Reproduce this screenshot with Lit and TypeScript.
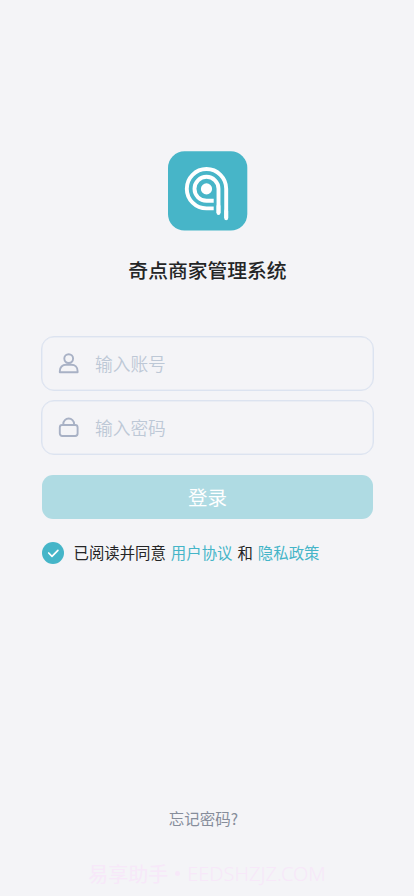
import { LitElement, html, css } from "lit";
import { customElement } from "lit/decorators.js";

@customElement("app-root")
export class AppRoot extends LitElement {
  static styles = css`
    :host {
      display: flex;
      flex-direction: column;
      box-sizing: border-box;
      width: 100%;
      height: 896px;
      padding: 151px 41px 0;
      overflow: hidden;
      background: #f4f4f7;
      color: #242526;
      font-family: "Noto Sans CJK SC", sans-serif;
    }
    svg { display: block; flex: none; }
    .logo { align-self: center; width: 80px; height: 80px; margin-left: 1px; }
    .title {
      margin: 24px 0 0 1px;
      text-align: center;
      font-size: 19.8px;
      line-height: 30px;
      font-weight: 500;
      white-space: nowrap;
    }
    .form { display: flex; flex-direction: column; gap: 9px; margin-top: 51px; width: 333px; }
    .field {
      display: flex;
      align-items: center;
      box-sizing: border-box;
      height: 55px;
      padding-left: 16px;
      gap: 15px;
      border: 1px solid #dce3f0;
      box-shadow: inset 0 0 0 0.5px #dfe6f2;
      border-radius: 13px;
    }
    .field input {
      flex: 1;
      min-width: 0;
      height: 30px;
      padding: 0;
      margin: 0 0 2px;
      border: 0;
      outline: 0;
      background: none;
      font: 350 17.7px/30px "Noto Sans CJK SC", sans-serif;
      color: #242526;
    }
    .field input::placeholder { color: #bdc8d6; opacity: 1; }
    .login {
      width: 331px;
      height: 44px;
      margin: 20.4px 0 0 1px;
      padding: 0;
      border: 0;
      border-radius: 11px;
      background: #afdbe3;
      color: #fff;
      font: 400 19.5px/44px "Noto Sans CJK SC", sans-serif;
    }
    .agree {
      display: flex;
      align-items: center;
      margin: 22.2px 0 0 1px;
      height: 22px;
      font-size: 15.4px;
      line-height: 22px;
      white-space: nowrap;
    }
    .agree span { margin: 0 0 2px 9.5px; }
    .agree .link, .agree .and { margin-left: 5px; }
    .link { color: #45b5c8; }
    .forgot {
      margin: 242.4px 0 0;
      padding-right: 7px;
      text-align: center;
      font-size: 15.5px;
      line-height: 24px;
      color: #868d9b;
    }
    .mark {
      display: flex;
      justify-content: center;
      align-items: center;
      gap: 7px;
      margin: 29px -41px 0;
      font-size: 20px;
      line-height: 30px;
      color: #f7e8f9;
      white-space: nowrap;
    }
    .dot { width: 5px; height: 5px; border-radius: 50%; background: #f7e8f9; }
    .latin { font-family: "Noto Sans", sans-serif; font-size: 20px; font-weight: 300; }
  `;

  render() {
    return html`
      <svg class="logo" viewBox="0 0 80 80" fill="none" stroke="#fff" stroke-width="3.9">
        <rect x="0" y="0.3" width="79.3" height="79.3" rx="16.5" fill="#47b5c8" stroke="none" />
        <circle cx="38.5" cy="37.9" r="5.6" fill="#fff" stroke="none" />
        <path d="M45.7 57.4H38.5A19.7 19.7 0 1 1 58.2 37.7V67" />
        <path d="M45.7 49.8H38.5A12 12 0 1 1 50.5 37.8V62" />
        <path stroke-linecap="round" d="M58.2 60V67.3M50.5 55V62" />
      </svg>
      <h1 class="title">奇点商家管理系统</h1>
      <div class="form">
        <label class="field">
          <svg width="22" height="22" viewBox="0 0 22 22" fill="none" stroke="#a8b1c5" stroke-width="1.9" stroke-linejoin="round">
            <circle cx="10.7" cy="5.6" r="4.4" />
            <path d="M1.8 19.2V18.2C1.8 14.3 4.4 11.8 8 11.8H13.4C17 11.8 19.6 14.3 19.6 18.2V19.2Z" />
          </svg>
          <input placeholder="输入账号" />
        </label>
        <label class="field">
          <svg width="22" height="22" viewBox="0 0 22 22" fill="none" stroke="#a8b1c5" stroke-width="1.9">
            <rect x="1.8" y="8" width="17.8" height="11" rx="2.4" />
            <path d="M5.3 8V6.9A5.4 5.4 0 0 1 16.1 6.9V8" />
          </svg>
          <input type="text" placeholder="输入密码" />
        </label>
      </div>
      <button class="login">登录</button>
      <div class="agree">
        <svg width="22" height="22" viewBox="0 0 22 22" fill="none">
          <circle cx="11" cy="11" r="11" fill="#45b5c8" />
          <path d="M6.7 11L10 14.3L15.9 8.3" stroke="#fff" stroke-width="1.7" stroke-linecap="round" stroke-linejoin="round" />
        </svg>
        <span>已阅读并同意</span><span class="link">用户协议</span><span class="and">和</span><span class="link">隐私政策</span>
      </div>
      <div class="forgot">忘记密码?</div>
      <div class="mark"><span>易享助手</span><i class="dot"></i><span class="latin">EEDSHZJZ.COM</span></div>
    `;
  }
}
